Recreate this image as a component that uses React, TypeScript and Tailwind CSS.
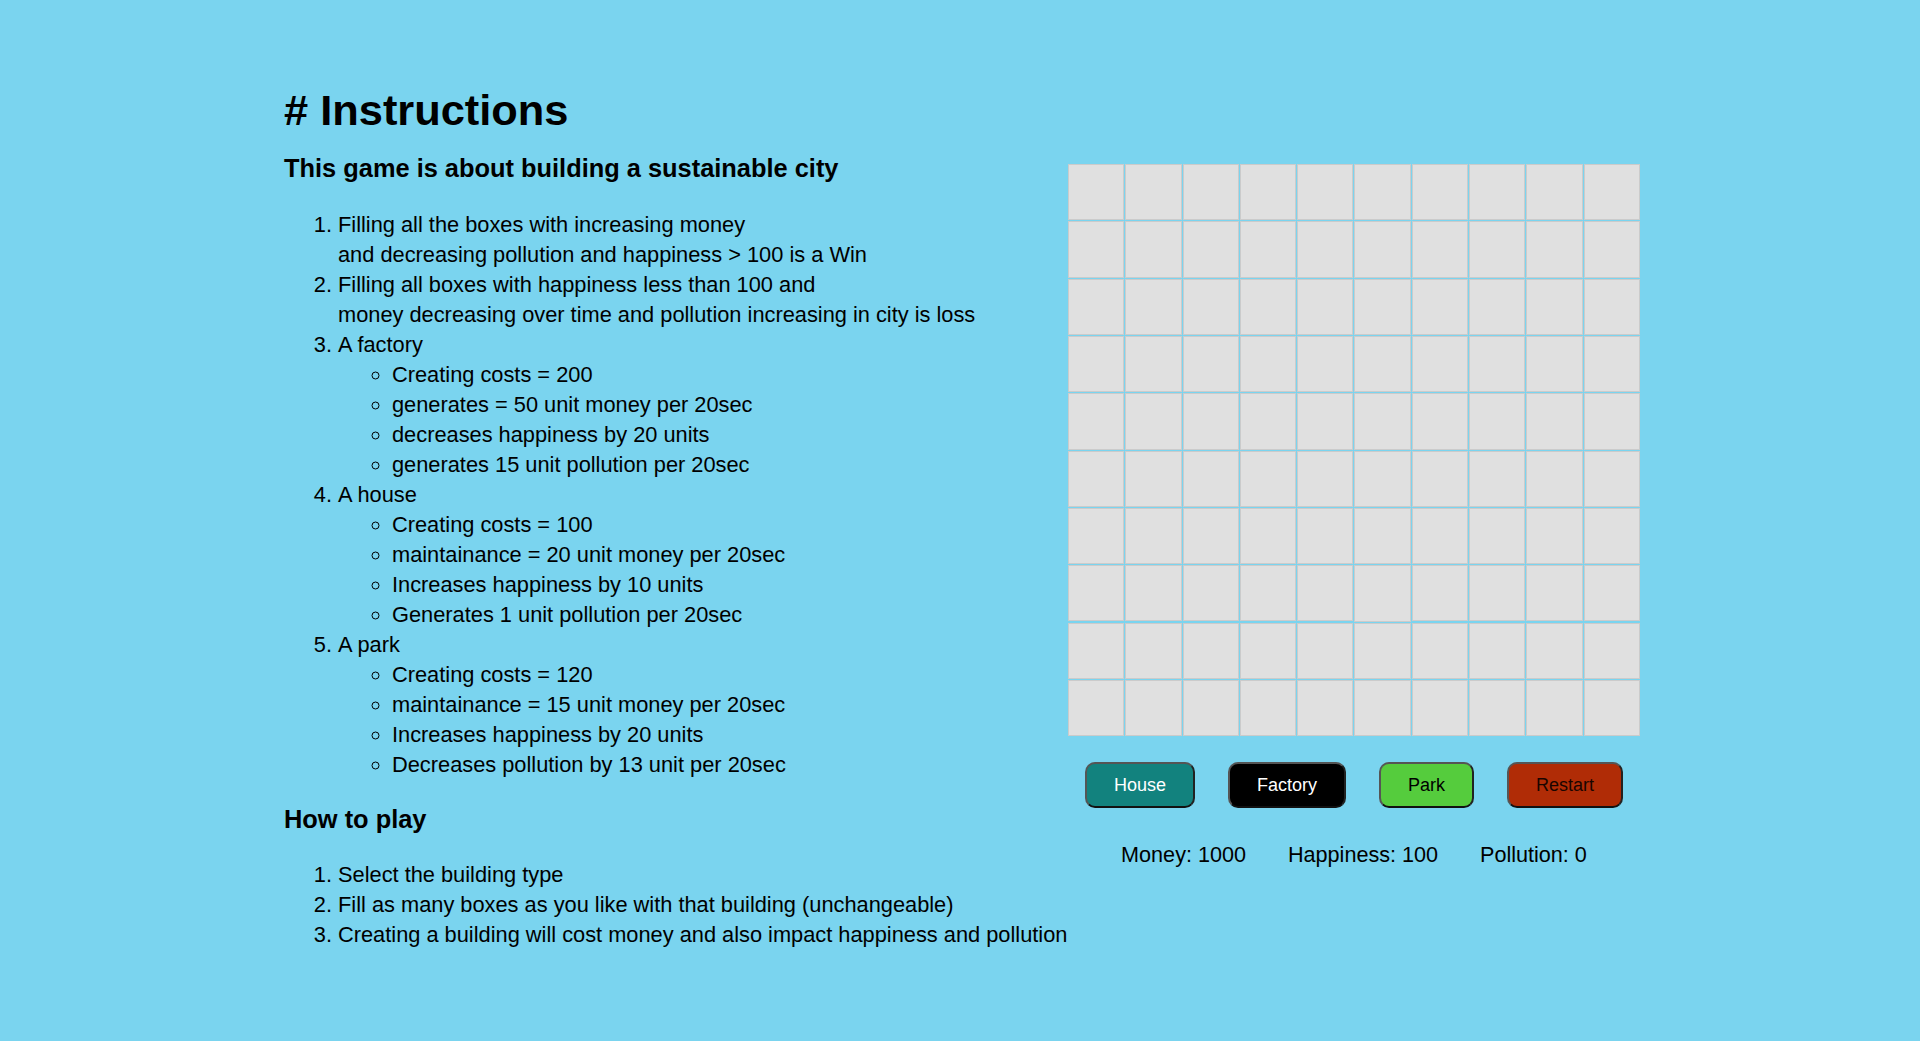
const factory = [
  "Creating costs = 200",
  "generates = 50 unit money per 20sec",
  "decreases happiness by 20 units",
  "generates 15 unit pollution per 20sec",
];

const house = [
  "Creating costs = 100",
  "maintainance = 20 unit money per 20sec",
  "Increases happiness by 10 units",
  "Generates 1 unit pollution per 20sec",
];

const park = [
  "Creating costs = 120",
  "maintainance = 15 unit money per 20sec",
  "Increases happiness by 20 units",
  "Decreases pollution by 13 unit per 20sec",
];

const howTo = [
  "Select the building type",
  "Fill as many boxes as you like with that building (unchangeable)",
  "Creating a building will cost money and also impact happiness and pollution",
];

function SubList({ items }: { items: string[] }) {
  return (
    <ul className="list-[circle] pl-[54px]">
      {items.map((t) => (
        <li key={t}>{t}</li>
      ))}
    </ul>
  );
}

function Btn({ label, className }: { label: string; className: string }) {
  return (
    <button
      className={
        "rounded-[10px] border-2 border-[#555] border-r-[#222] border-b-[#111] px-[27px] py-[11px] text-[18px] leading-[20px] " +
        className
      }
    >
      {label}
    </button>
  );
}

export default function App() {
  const cells = Array.from({ length: 100 }, (_, i) => i);

  return (
    <div
      className="min-h-screen bg-[#7ad4ef] text-black"
      style={{ fontFamily: '"Liberation Sans", Arial, sans-serif' }}
    >
      <div className="ml-[284px] flex w-[1356px] items-start justify-between pt-[85px]">
        <div className="flex-1 whitespace-nowrap text-[21.8px] leading-[30px]">
          <h1 className="text-[43.4px] font-bold leading-[50px]"># Instructions</h1>
          <h3 className="mt-[18px] text-[25.4px] font-bold leading-[30px]">
            This game is about building a sustainable city
          </h3>
          <ol className="mt-[27px] list-decimal pl-[54px]">
            <li>
              Filling all the boxes with increasing money
              <br />
              and decreasing pollution and happiness &gt; 100 is a Win
            </li>
            <li>
              Filling all boxes with happiness less than 100 and
              <br />
              money decreasing over time and pollution increasing in city is loss
            </li>
            <li>
              A factory
              <SubList items={factory} />
            </li>
            <li>
              A house
              <SubList items={house} />
            </li>
            <li>
              A park
              <SubList items={park} />
            </li>
          </ol>
          <h3 className="mt-[24px] text-[25.4px] font-bold leading-[30px]">How to play</h3>
          <ol className="mt-[26px] list-decimal pl-[54px]">
            {howTo.map((t) => (
              <li key={t}>{t}</li>
            ))}
          </ol>
        </div>

        <div className="mt-[79px] w-[572px] shrink-0">
          <div className="grid grid-cols-10 gap-px">
            {cells.map((i) => (
              <div key={i} className="aspect-square border border-[#cbcbcb] bg-[#e0e0e0]" />
            ))}
          </div>
          <div className="mt-[26px] flex justify-center gap-[33px]">
            <Btn label="House" className="bg-[#12827e] text-white" />
            <Btn label="Factory" className="bg-black text-white" />
            <Btn label="Park" className="bg-[#55cc3d] text-black" />
            <Btn label="Restart" className="bg-[#b02c06] text-[#1a0500]" />
          </div>
          <div className="mt-[32px] flex justify-center gap-[42px] text-[21.6px] leading-[30px]">
            <span>Money: 1000</span>
            <span>Happiness: 100</span>
            <span>Pollution: 0</span>
          </div>
        </div>
      </div>
    </div>
  );
}
